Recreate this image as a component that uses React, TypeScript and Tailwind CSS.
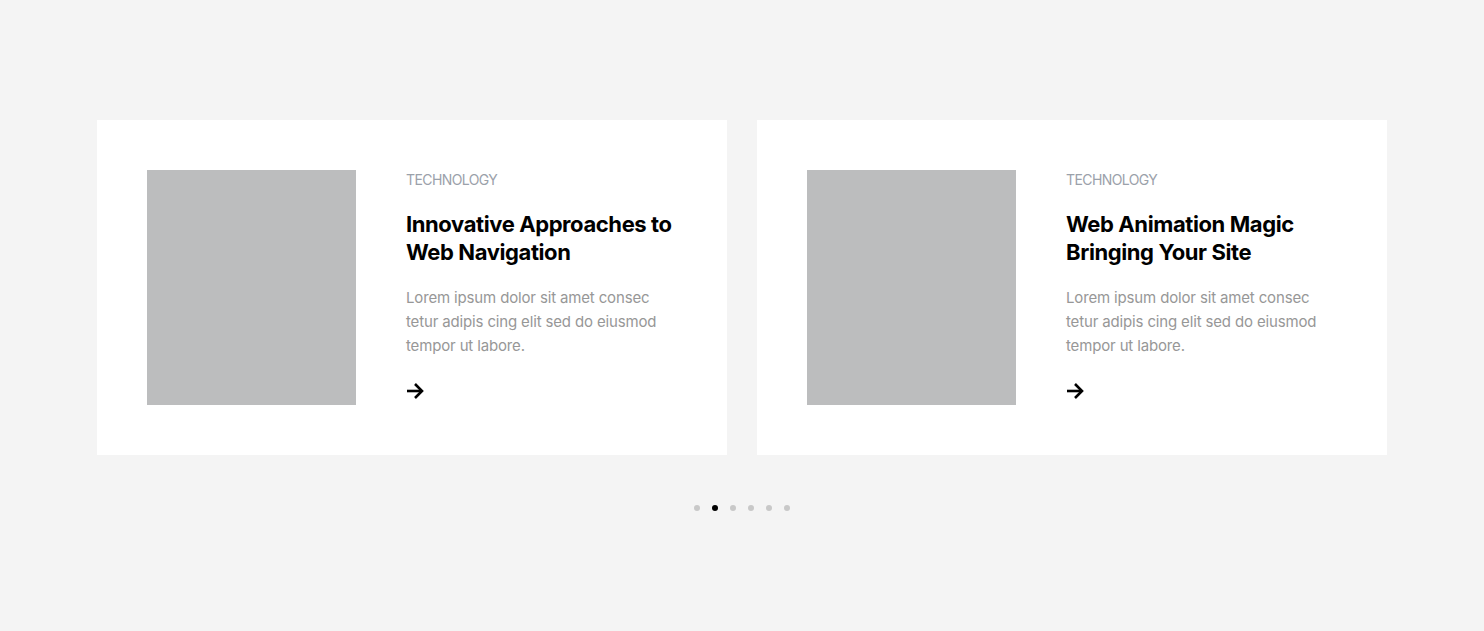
import React from "react";

const cards = [
  { title: ["Innovative Approaches to", "Web Navigation"] },
  { title: ["Web Animation Magic", "Bringing Your Site"] },
];

function Arrow() {
  return (
    <svg width="19" height="18" viewBox="0 0 19 18" fill="none">
      <path d="M1 9h15" stroke="#000" strokeWidth="2.6" />
      <path d="M9 2l7 7-7 7" stroke="#000" strokeWidth="2.6" strokeLinejoin="miter" />
    </svg>
  );
}

export default function App() {
  return (
    <div
      className="min-h-[631px] w-full bg-[#f4f4f4] flex flex-col items-center pt-[120px]"
      style={{ fontFamily: "Inter, 'Noto Sans', sans-serif" }}
    >
      <div className="flex gap-[30px]">
        {cards.map((c, i) => (
          <div key={i} className="w-[630px] h-[335px] bg-white p-[50px] flex gap-[50px]">
            <div className="w-[209px] h-[235px] bg-[#bcbdbe] shrink-0" />
            <div className="flex flex-col">
              <div className="text-[14px] leading-[20px] text-[#9ba1aa] tracking-[-0.6px]">TECHNOLOGY</div>
              <h3 className="mt-[20px] text-[22px] leading-[28px] font-bold text-black tracking-[-0.4px] whitespace-nowrap">
                {c.title[0]}
                <br />
                {c.title[1]}
              </h3>
              <p className="mt-[20px] text-[15px] leading-[24px] text-[#979797] whitespace-nowrap tracking-[-0.15px]">
                Lorem ipsum dolor sit amet consec
                <br />
                tetur adipis cing elit sed do eiusmod
                <br />
                tempor ut labore.
              </p>
              <div className="mt-[24px] flex">
                <Arrow />
              </div>
            </div>
          </div>
        ))}
      </div>
      <div className="mt-[50px] flex gap-[12px]">
        {[0, 1, 2, 3, 4, 5].map((d) => (
          <span
            key={d}
            className={`w-[6px] h-[6px] rounded-full ${d === 1 ? "bg-black" : "bg-[#c8c8c8]"}`}
          />
        ))}
      </div>
    </div>
  );
}
